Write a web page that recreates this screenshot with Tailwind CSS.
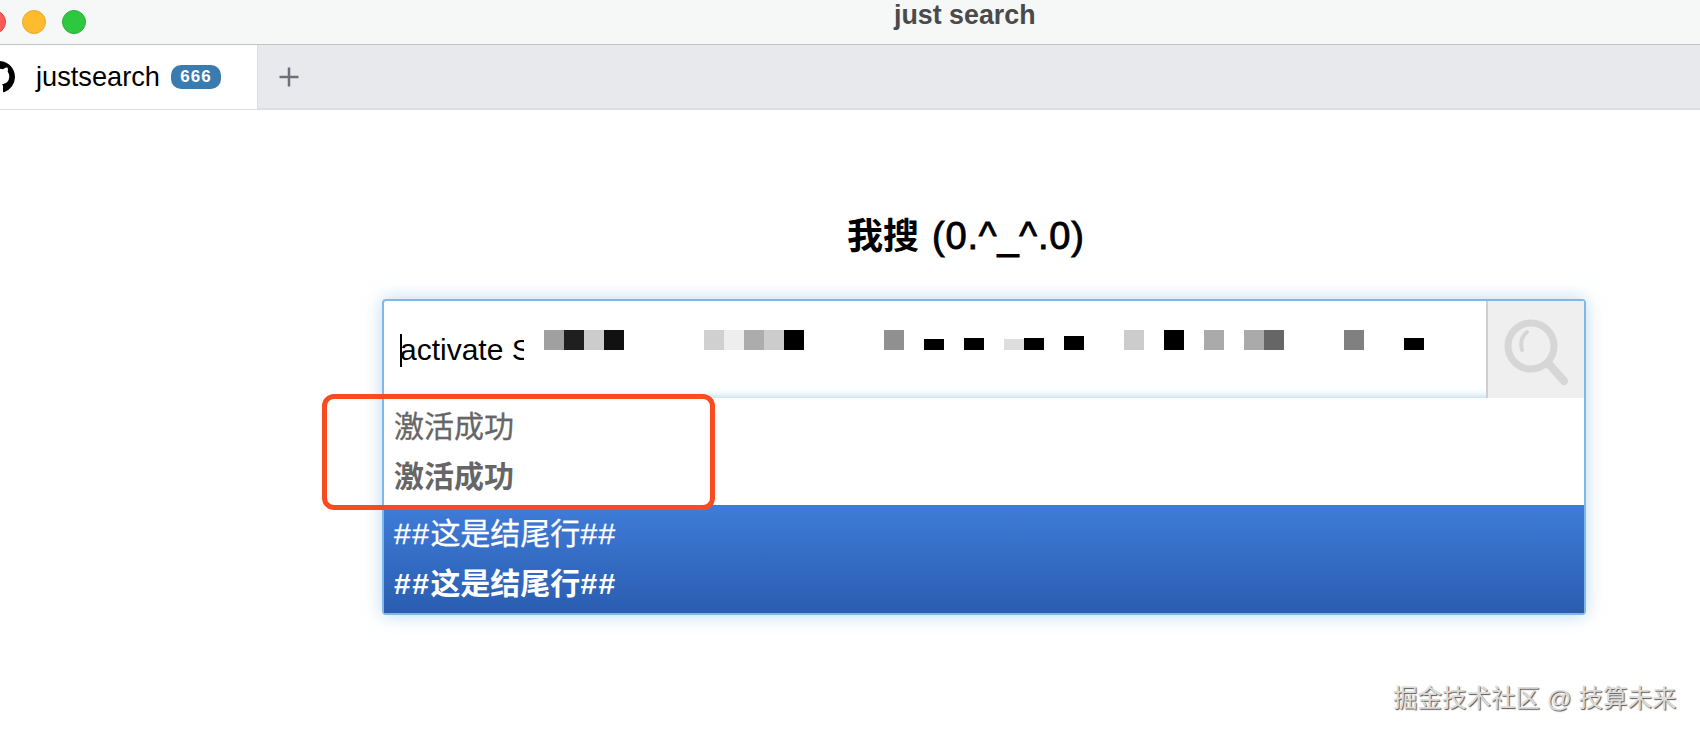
<!doctype html>
<html lang="zh">
<head>
<meta charset="utf-8">
<script src="https://cdn.jsdelivr.net/npm/@tailwindcss/browser@4"></script>
<title>just search</title>
</head>
<body class="bg-white overflow-hidden font-['Liberation_Sans','Noto_Sans_CJK_SC',sans-serif]">
<div class="relative w-[1700px] h-[734px] overflow-hidden">
  <header class="h-[45px] flex items-center bg-[#f6f7f7] border-b border-[#c4c5c6]">
    <div class="flex gap-4 -ml-[18px] shrink-0">
      <span class="w-6 h-6 rounded-full bg-[#fc5b57] border border-[#e5453f]"></span>
      <span class="w-6 h-6 rounded-full bg-[#febb2e] border border-[#e9a92c]"></span>
      <span class="w-6 h-6 rounded-full bg-[#2ec840] border border-[#2bb03b]"></span>
    </div>
    <div class="ml-[808px] -mt-[14px] text-[26.800px] leading-[30px] font-bold text-[#4a4a4a]">just search</div>
  </header>
  <nav class="h-[65px] flex bg-[#e8e9ed] border-b-2 border-[#dcdde1]">
    <div class="w-[258px] h-[64px] bg-white border-r border-[#dcdde1] flex items-center">
      <svg class="w-8 h-8 -ml-[17px] shrink-0 text-black" viewBox="0 0 16 16" fill="currentColor"><path d="M8 0C3.58 0 0 3.58 0 8c0 3.54 2.29 6.53 5.47 7.59.4.07.55-.17.55-.38 0-.19-.01-.82-.01-1.49-2.01.37-2.53-.49-2.69-.94-.09-.23-.48-.94-.82-1.13-.28-.15-.68-.52-.01-.53.63-.01 1.08.58 1.23.82.72 1.21 1.87.87 2.33.66.07-.52.28-.87.51-1.07-1.78-.2-3.64-.89-3.64-3.95 0-.87.31-1.59.82-2.15-.08-.2-.36-1.02.08-2.12 0 0 .67-.21 2.2.82.64-.18 1.32-.27 2-.27.68 0 1.36.09 2 .27 1.53-1.04 2.2-.82 2.2-.82.44 1.1.16 1.92.08 2.12.51.56.82 1.27.82 2.15 0 3.07-1.87 3.75-3.65 3.95.29.25.54.73.54 1.48 0 1.07-.01 1.93-.01 2.2 0 .21.15.46.55.38A8.013 8.013 0 0016 8c0-4.42-3.58-8-8-8z"/></svg>
      <span class="ml-[21px] text-[27.200px] leading-[30px] text-black">justsearch</span>
      <span class="ml-[11px] w-[50px] h-6 rounded-[10px] bg-[#3a7bb0] text-white text-[17px] font-bold tracking-[1px] flex items-center justify-center">666</span>
    </div>
    <svg class="ml-[20px] mt-[21px] w-[22px] h-[22px] text-[#6d7177]" viewBox="0 0 22 22" fill="none" stroke="currentColor" stroke-width="2.500"><path d="M11 1.500V20.500M1.500 11H20.500"/></svg>
  </nav>
  <main>
    <h1 class="ml-[847px] mt-[103px] h-[46px] text-[36px] leading-[46px] font-bold text-black whitespace-nowrap">我搜<span class="ml-[13px] text-[38px] tracking-[0.800px] font-normal [-webkit-text-stroke:0.9px_black]">(0.^_^.0)</span></h1>
    <section class="ml-[382px] mt-[40px] w-[1204px] rounded-[4px] border-2 border-[#7fb8e6] shadow-[0_0_18px_#7fb8e688]">
      <div class="h-[97px] flex shadow-[inset_0_-10px_10px_-10px_#9ccaf0]">
        <div class="flex-1 relative flex items-start pl-4 overflow-hidden">
          <span class="absolute left-4 top-[33px] w-px border-l-2 border-black h-[33px]"></span>
          <span class="mt-[31px] w-[124px] overflow-hidden whitespace-nowrap text-[30px] leading-[36px] text-black shrink-0">activate S</span>
          <div class="flex items-end h-[20px] mt-[29px] ml-[20px]">
            <i class="block w-5 h-5 bg-[#a0a0a0]"></i><i class="block w-5 h-5 bg-[#1f1f1f]"></i><i class="block w-5 h-5 bg-[#cccccc]"></i><i class="block w-5 h-5 bg-[#111111]"></i>
            <i class="block w-5 h-5 ml-20 bg-[#d0d0d0]"></i><i class="block w-5 h-5 bg-[#eeeeee]"></i><i class="block w-5 h-5 bg-[#acacac]"></i><i class="block w-5 h-5 bg-[#cccccc]"></i><i class="block w-5 h-5 bg-black"></i>
            <i class="block w-5 h-5 ml-20 bg-[#909090]"></i>
            <i class="block w-5 h-[11px] ml-5 bg-black"></i>
            <i class="block w-5 h-[12px] ml-5 bg-black"></i>
            <i class="block w-5 h-[11px] ml-5 bg-[#dddddd]"></i><i class="block w-5 h-[12px] bg-black"></i>
            <i class="block w-5 h-[14px] ml-5 bg-black"></i>
            <i class="block w-5 h-5 ml-10 bg-[#cccccc]"></i>
            <i class="block w-5 h-5 ml-5 bg-black"></i>
            <i class="block w-5 h-5 ml-5 bg-[#aaaaaa]"></i>
            <i class="block w-5 h-5 ml-5 bg-[#aaaaaa]"></i><i class="block w-5 h-5 bg-[#666666]"></i>
            <i class="block w-5 h-5 ml-[60px] bg-[#808080]"></i>
            <i class="block w-5 h-[12px] ml-10 bg-black"></i>
          </div>
        </div>
        <button class="w-[98px] shrink-0 bg-[#efefef] border-l-2 border-[#cfcfcf] flex items-center justify-center pt-[4px]">
          <svg class="w-[70px] h-[70px]" viewBox="0 0 70 70" fill="none" stroke="#d6d6d6"><circle cx="30" cy="29" r="23" stroke-width="7"/><path d="M21 33C19 25 21 19 26 15" stroke-width="4" stroke-linecap="round"/><path d="M47 46L63 64" stroke-width="8" stroke-linecap="round"/></svg>
        </button>
      </div>
      <ul>
        <li class="h-[107px] bg-white pl-[10px] pt-[4px] text-[30px] leading-[50px] text-[#666666]">
          <p class="[-webkit-text-stroke:0.3px_#666666]">激活成功</p>
          <p class="font-bold">激活成功</p>
        </li>
        <li class="h-[108px] bg-gradient-to-b from-[#3f7cd9] to-[#2a5db0] pl-[10px] pt-[4px] text-[30px] leading-[50px] text-white">
          <p class="[-webkit-text-stroke:0.3px_white]"><span class="tracking-[1.500px]">##</span>这是结尾行<span class="tracking-[1.500px]">##</span></p>
          <p class="font-bold"><span class="tracking-[1.500px]">##</span>这是结尾行<span class="tracking-[1.500px]">##</span></p>
        </li>
      </ul>
    </section>
  </main>
  <div class="absolute left-[322px] top-[394px] w-[393px] h-[116px] rounded-[12px] border-[5px] border-[#f94b20]"></div>
  <div class="absolute left-[1393px] top-[684px] text-[24.500px] leading-[30px] whitespace-nowrap text-[#dcdcdc] [text-shadow:1px_1px_1px_#555555]">掘金技术社区 @ 技算未来</div>
</div>
</body>
</html>
